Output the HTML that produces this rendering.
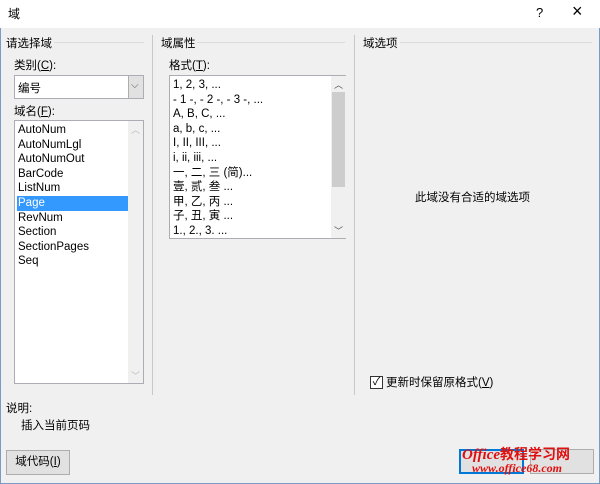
<!DOCTYPE html><html><head><meta charset="utf-8"><style>
*{margin:0;padding:0;box-sizing:border-box}
body{width:600px;height:484px;background:#f0f0f0;font-family:"Liberation Sans","Noto Sans CJK SC",sans-serif;font-size:11.5px;color:#000;position:relative;overflow:hidden}
.a{position:absolute;white-space:nowrap}
.lb{background:#fff;border:1px solid #abadb3}
.it{position:absolute;left:2px;height:14.6px;line-height:14.6px;padding-left:1px}
.sb{position:absolute;background:#f0f0f0}
</style></head><body>
<div class="a" style="left:0;top:0;width:600px;height:28px;background:#fff"></div>
<div class="a" style="left:8px;top:5px;font-size:12px">域</div>
<div class="a" style="left:536px;top:5px;font-size:13px">?</div>
<div class="a" style="left:572px;top:1px;font-size:18px;font-weight:300">×</div>
<div class="a" style="left:0;top:28px;width:1px;height:456px;background:#7a9cc4"></div>
<div class="a" style="left:599px;top:28px;width:1px;height:456px;background:#7a9cc4"></div>
<div class="a" style="left:0;top:483px;width:600px;height:1px;background:#7a9cc4"></div>

<div class="a" style="left:6px;top:35px">请选择域</div>
<div class="a" style="left:54px;top:42px;width:90px;height:1px;background:#dcdcdc"></div>
<div class="a" style="left:152px;top:35px;width:1px;height:360px;background:#c8c8c8"></div>
<div class="a" style="left:161px;top:35px">域属性</div>
<div class="a" style="left:197px;top:42px;width:148px;height:1px;background:#dcdcdc"></div>
<div class="a" style="left:354px;top:35px;width:1px;height:360px;background:#c8c8c8"></div>
<div class="a" style="left:363px;top:35px">域选项</div>
<div class="a" style="left:400px;top:42px;width:192px;height:1px;background:#dcdcdc"></div>

<div class="a" style="left:14px;top:57px">类别(<u>C</u>):</div>
<div class="a lb" style="left:14px;top:75px;width:130px;height:24px"></div>
<div class="a" style="left:18px;top:80px">编号</div>
<div class="a" style="left:128px;top:76px;width:15px;height:22px;background:#e1e1e1;border-left:1px solid #adadad"></div>
<div class="a" style="left:131px;top:80px;font-size:10px;color:#555">⌵</div>

<div class="a" style="left:14px;top:103px">域名(<u>F</u>):</div>
<div class="a lb" style="left:14px;top:120px;width:130px;height:264px">
<div class="it" style="top:2px">AutoNum</div>
<div class="it" style="top:16.6px">AutoNumLgl</div>
<div class="it" style="top:31.2px">AutoNumOut</div>
<div class="it" style="top:45.8px">BarCode</div>
<div class="it" style="top:60.4px">ListNum</div>
<div class="it" style="top:75px;width:111px;background:#3399ff;color:#fff">Page</div>
<div class="it" style="top:89.6px">RevNum</div>
<div class="it" style="top:104.2px">Section</div>
<div class="it" style="top:118.8px">SectionPages</div>
<div class="it" style="top:133.4px">Seq</div>
<div class="sb" style="left:113px;top:0;width:15px;height:262px"></div>
<div class="a" style="left:116px;top:2px;font-size:9px;color:#bbb">︿</div>
<div class="a" style="left:116px;top:248px;font-size:9px;color:#bbb">﹀</div>
</div>

<div class="a" style="left:169px;top:57px">格式(<u>T</u>):</div>
<div class="a lb" style="left:169px;top:75px;width:177px;height:164px">
<div class="it" style="top:2px">1, 2, 3, ...</div>
<div class="it" style="top:16.6px">- 1 -, - 2 -, - 3 -, ...</div>
<div class="it" style="top:31.2px">A, B, C, ...</div>
<div class="it" style="top:45.8px">a, b, c, ...</div>
<div class="it" style="top:60.4px">I, II, III, ...</div>
<div class="it" style="top:75px">i, ii, iii, ...</div>
<div class="it" style="top:89.6px">一, 二, 三 (简)...</div>
<div class="it" style="top:104.2px">壹, 贰, 叁 ...</div>
<div class="it" style="top:118.8px">甲, 乙, 丙 ...</div>
<div class="it" style="top:133.4px">子, 丑, 寅 ...</div>
<div class="it" style="top:148px">1., 2., 3. ...</div>
<div class="sb" style="left:161px;top:0;width:15px;height:162px"></div>
<div class="a" style="left:162px;top:16px;width:13px;height:95px;background:#cdcdcd"></div>
<div class="a" style="left:164px;top:2px;font-size:9px;color:#555">︿</div>
<div class="a" style="left:164px;top:148px;font-size:9px;color:#555">﹀</div>
</div>

<div class="a" style="left:415px;top:189px">此域没有合适的域选项</div>
<div class="a" style="left:370px;top:376px;width:13px;height:13px;border:1px solid #333;background:#fff;font-size:11px;line-height:11px;text-align:center">✓</div>
<div class="a" style="left:386px;top:374px">更新时保留原格式(<u>V</u>)</div>

<div class="a" style="left:6px;top:400px">说明:</div>
<div class="a" style="left:21px;top:417px">插入当前页码</div>
<div class="a" style="left:6px;top:450px;width:64px;height:25px;background:#e1e1e1;border:1px solid #adadad;text-align:center;line-height:23px">域代码(<u>I</u>)</div>

<div class="a" style="left:459px;top:449px;width:65px;height:25px;background:#e1e1e1;border:2px solid #0078d7"></div>
<div class="a" style="left:530px;top:449px;width:64px;height:25px;background:#e1e1e1;border:1px solid #adadad"></div>
<div class="a" style="left:462px;top:444px;color:#e01010;font-size:15px;font-weight:bold;font-family:'Liberation Serif','Noto Serif CJK SC',serif;font-style:italic">Office<span style="font-style:normal;font-family:'Noto Sans CJK SC',sans-serif;font-size:14px">教程学习网</span></div>
<div class="a" style="left:472px;top:461px;color:#e01010;font-size:12px;font-weight:bold;font-style:italic;font-family:'Liberation Serif',serif">www.office68.com</div>
</body></html>
